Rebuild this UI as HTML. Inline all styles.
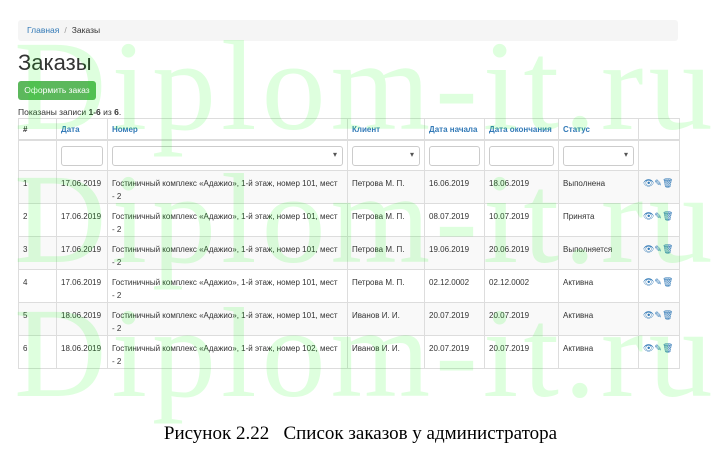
<!DOCTYPE html>
<html><head><meta charset="utf-8"><style>
body{margin:0;width:721px;height:460px;background:#fff;position:relative;overflow:hidden;font-family:"Liberation Sans",sans-serif;color:#333}
.bc{position:absolute;left:18px;top:20px;width:660px;height:21px;background:#f5f5f5;border-radius:3px;font-size:8.5px;line-height:21px}
.bc a{color:#337ab7;margin-left:9px}.bc span{color:#999;margin:0 5px}
h1{position:absolute;left:18px;top:50px;margin:0;font-weight:400;font-size:22px;color:#333}
.btn{position:absolute;left:18px;top:81px;width:78px;height:19px;background:#5cb85c;color:#fff;font-size:8.5px;line-height:19px;text-align:center;border-radius:3px}
.sum{position:absolute;left:18px;top:107px;font-size:8.5px}
table{position:absolute;left:18px;top:118px;width:661px;border-collapse:collapse;font-size:8px;table-layout:fixed}
td,th{border:1px solid #ddd;padding:0 4px;vertical-align:top;text-align:left;white-space:nowrap;overflow:hidden}
th{height:20px;vertical-align:middle;color:#337ab7;font-weight:bold;border-bottom:2px solid #ddd}
th:first-child{color:#333}
tr.f td{height:29px;vertical-align:middle}
.in{height:18px;border:1px solid #ccc;border-radius:3px;position:relative}
.in.s:after{content:"▾";position:absolute;right:5px;top:3px;font-size:8px;color:#555}
tr.d td{padding-top:6px;padding-bottom:0;line-height:13px}
tr.d td div{height:26px}
tr.d:nth-child(odd) td{background:#f9f9f9}
.ic{color:#337ab7;font-size:9px;white-space:nowrap}
.wm{position:absolute;left:14px;font-family:"Liberation Serif",serif;font-size:128px;letter-spacing:5px;color:rgba(0,255,0,0.13);white-space:nowrap;line-height:1}
.cap{position:absolute;left:0;width:721px;top:423px;text-align:center;font-family:"Liberation Serif",serif;font-size:19px;color:#000;white-space:pre}
</style></head><body>
<div class="bc"><a>Главная</a><span>/</span>Заказы</div>
<h1>Заказы</h1>
<div class="btn">Оформить заказ</div>
<div class="sum">Показаны записи <b>1-6</b> из <b>6</b>.</div>
<table>
<colgroup><col style="width:38px"><col style="width:51px"><col style="width:240px"><col style="width:77px"><col style="width:60px"><col style="width:74px"><col style="width:80px"><col style="width:41px"></colgroup>
<tr><th>#</th><th>Дата</th><th>Номер</th><th>Клиент</th><th>Дата начала</th><th>Дата окончания</th><th>Статус</th><th></th></tr>
<tr class="f"><td></td><td><div class="in"></div></td><td><div class="in s"></div></td><td><div class="in s"></div></td><td><div class="in"></div></td><td><div class="in"></div></td><td><div class="in s"></div></td><td></td></tr>
<tr class="d"><td>1</td><td>17.06.2019</td><td><div>Гостиничный комплекс «Адажио», 1-й этаж, номер 101, мест<br>- 2</div></td><td>Петрова М. П.</td><td>16.06.2019</td><td>18.06.2019</td><td>Выполнена</td><td class="ic">👁✎🗑</td></tr>
<tr class="d"><td>2</td><td>17.06.2019</td><td><div>Гостиничный комплекс «Адажио», 1-й этаж, номер 101, мест<br>- 2</div></td><td>Петрова М. П.</td><td>08.07.2019</td><td>10.07.2019</td><td>Принята</td><td class="ic">👁✎🗑</td></tr>
<tr class="d"><td>3</td><td>17.06.2019</td><td><div>Гостиничный комплекс «Адажио», 1-й этаж, номер 101, мест<br>- 2</div></td><td>Петрова М. П.</td><td>19.06.2019</td><td>20.06.2019</td><td>Выполняется</td><td class="ic">👁✎🗑</td></tr>
<tr class="d"><td>4</td><td>17.06.2019</td><td><div>Гостиничный комплекс «Адажио», 1-й этаж, номер 101, мест<br>- 2</div></td><td>Петрова М. П.</td><td>02.12.0002</td><td>02.12.0002</td><td>Активна</td><td class="ic">👁✎🗑</td></tr>
<tr class="d"><td>5</td><td>18.06.2019</td><td><div>Гостиничный комплекс «Адажио», 1-й этаж, номер 101, мест<br>- 2</div></td><td>Иванов И. И.</td><td>20.07.2019</td><td>20.07.2019</td><td>Активна</td><td class="ic">👁✎🗑</td></tr>
<tr class="d"><td>6</td><td>18.06.2019</td><td><div>Гостиничный комплекс «Адажио», 1-й этаж, номер 102, мест<br>- 2</div></td><td>Иванов И. И.</td><td>20.07.2019</td><td>20.07.2019</td><td>Активна</td><td class="ic">👁✎🗑</td></tr>
</table>
<div class="wm" style="top:22px">Diplom-it.ru</div>
<div class="wm" style="top:155px">Diplom-it.ru</div>
<div class="wm" style="top:289px">Diplom-it.ru</div>
<div class="cap">Рисунок 2.22   Список заказов у администратора</div>
</body></html>
